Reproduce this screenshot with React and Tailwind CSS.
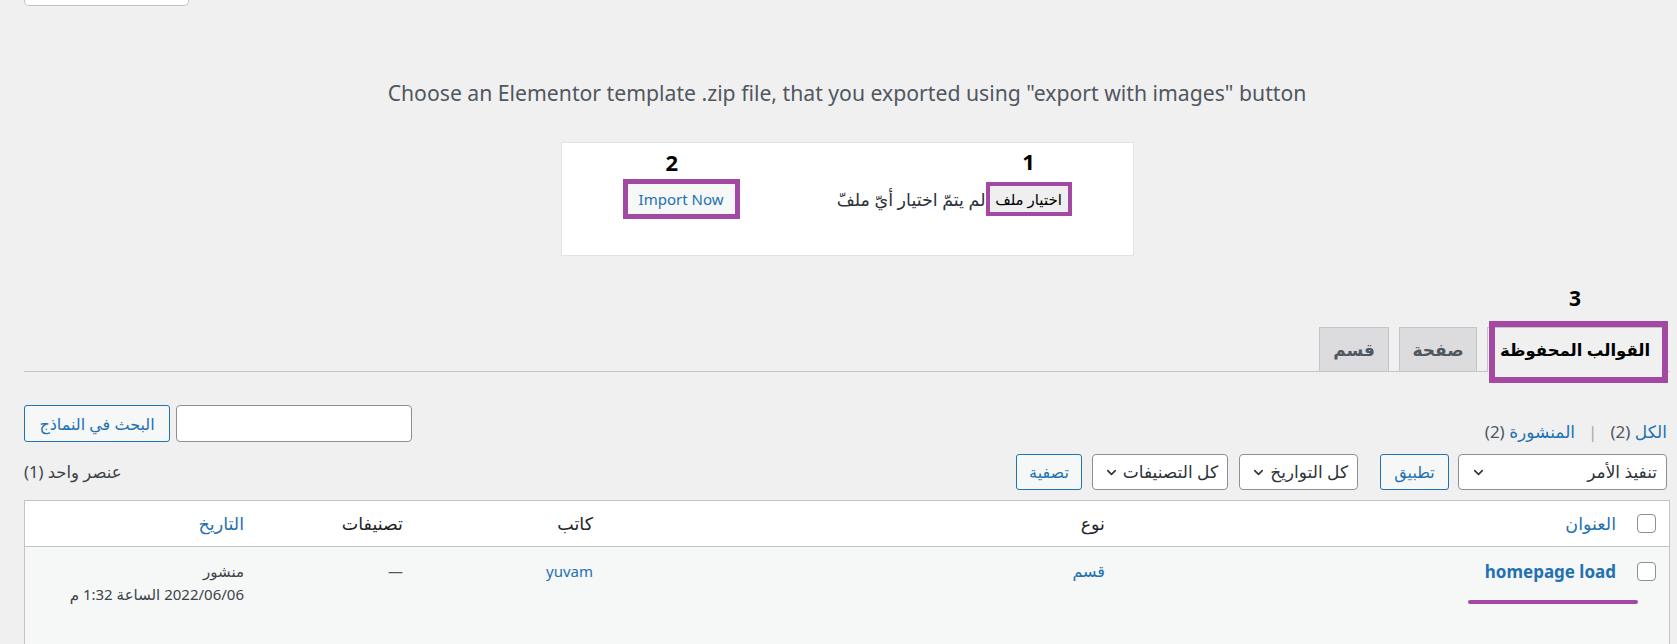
import React from 'react';
import { ChevronDown } from 'lucide-react';

// annotation frame colour used in the screenshot
const PURPLE = 'border-[#a349a4]';

const Select = ({ label, width }) => (
  <div
    className={`flex h-[36px] items-center justify-between gap-[4px] whitespace-nowrap rounded-[4px] border border-[#8c8f94] bg-white pr-[9px] pl-[12px] text-[17px] text-[#2c3338] ${width}`}
  >
    <span>{label}</span>
    <ChevronDown size={15} strokeWidth={2.5} className="shrink-0 text-[#2c3338]" />
  </div>
);

const SecondaryButton = ({ children, width }) => (
  <button
    className={`flex h-[36px] items-center justify-center whitespace-nowrap rounded-[3px] border border-[#2271b1] bg-[#f6f7f7] text-[16px] text-[#2271b1] ${width}`}
  >
    {children}
  </button>
);

const Checkbox = () => (
  <span className="block h-[19px] w-[19px] rounded-[4px] border border-[#8c8f94] bg-white" />
);

const App = () => {
  return (
    <div
      dir="rtl"
      className="h-[644px] overflow-hidden bg-[#f0f0f1] pl-[24px] pr-[7px] font-['Noto_Sans','DejaVu_Sans',sans-serif] text-[#3c434a]"
    >
      {/* partial box cut off at the top */}
      <div className="flex justify-end">
        <div className="h-[6px] w-[165px] rounded-b-[5px] border border-t-0 border-[#c3c4c7] bg-white" />
      </div>

      <h2 dir="ltr" className="mt-[72px] text-center text-[21.2px] leading-[30px] text-[#50575e]">
        Choose an Elementor template .zip file, that you exported using "export with images" button
      </h2>

      {/* upload box */}
      <div className="mx-auto mt-[34px] flex h-[114px] w-[573px] items-center justify-center gap-[90px] border border-[#e2e2e2] bg-white">
        <div className="flex items-center">
          <span className={`relative border-[4px] ${PURPLE}`}>
            <span className="absolute -top-[36px] left-1/2 -translate-x-1/2 text-[22px] font-bold leading-[22px] text-black">
              1
            </span>
            <span className="flex h-[26px] w-[78px] items-center justify-center bg-[#efefef] text-[15px] text-black">
              اختيار ملف
            </span>
          </span>
          <span className="w-[156px] text-[17.5px] text-[#2c3338]">لم يتمّ اختيار أيّ ملفّ</span>
        </div>
        <span className={`relative border-[5px] ${PURPLE}`}>
          <span className="absolute -top-[33px] left-[38px] text-[22px] font-bold leading-[22px] text-black">
            2
          </span>
          <span className="flex h-[30px] w-[107px] items-center justify-center bg-[#f6f7f7] text-[15px] text-[#2271b1]">
            Import Now
          </span>
        </span>
      </div>

      {/* tabs */}
      <div className="mt-[71px] flex items-end gap-[10px] border-b border-[#c3c4c7] pr-[7px]">
        <div className="relative -mb-px flex h-[45px] w-[176px] items-center justify-center whitespace-nowrap border border-b-0 border-[#c3c4c7] bg-[#f0f0f1] text-[16.5px] font-bold text-black">
          القوالب المحفوظة
          <span className={`pointer-events-none absolute -top-[7px] -right-[6px] -bottom-[11px] left-[1px] border-[6px] ${PURPLE}`} />
          <span className="absolute -top-[40px] left-1/2 -translate-x-1/2 text-[21px] font-bold leading-[21px] text-black">
            3
          </span>
        </div>
        <div className="flex h-[44px] w-[78px] items-center justify-center border border-b-0 border-[#c3c4c7] bg-[#dcdcde] text-[17px] font-bold text-[#50575e]">
          صفحة
        </div>
        <div className="flex h-[44px] w-[70px] items-center justify-center border border-b-0 border-[#c3c4c7] bg-[#dcdcde] text-[17px] font-bold text-[#50575e]">
          قسم
        </div>
      </div>

      {/* status links + search */}
      <div className="mt-[33px] flex items-end justify-between pr-[3px]">
        <div className="flex items-center gap-[13px] text-[17px] leading-[20px]">
          <span className="text-[#2271b1]">
            الكل <span className="text-[#50575e]">(2)</span>
          </span>
          <span className="text-[#a7aaad]">|</span>
          <span className="text-[#2271b1]">
            المنشورة <span className="text-[#50575e]">(2)</span>
          </span>
        </div>
        <div className="flex items-center gap-[6px]">
          <div className="h-[37px] w-[236px] rounded-[4px] border border-[#8c8f94] bg-white" />
          <SecondaryButton width="w-[146px] h-[37px]">البحث في النماذج</SecondaryButton>
        </div>
      </div>

      {/* bulk actions + filters */}
      <div className="mt-[12px] flex items-center justify-between pr-[3px]">
        <div className="flex items-center">
          <Select label="تنفيذ الأمر" width="w-[209px]" />
          <div className="mr-[9px]">
            <SecondaryButton width="w-[69px]">تطبيق</SecondaryButton>
          </div>
          <div className="mr-[22px]">
            <Select label="كل التواريخ" width="w-[119px]" />
          </div>
          <div className="mr-[11px]">
            <Select label="كل التصنيفات" width="w-[136px]" />
          </div>
          <div className="mr-[10px]">
            <SecondaryButton width="w-[66px]">تصفية</SecondaryButton>
          </div>
        </div>
        <span className="text-[16.5px] text-[#3c434a]">عنصر واحد (1)</span>
      </div>

      {/* table */}
      <div className="mt-[10px] border border-[#c3c4c7]">
        <div className="grid h-[46px] grid-cols-[44px_510px_512px_190px_159px_1fr] items-center border-b border-[#c3c4c7] bg-white text-[17.5px]">
          <div className="flex pr-[13px]">
            <Checkbox />
          </div>
          <div className="pr-[9px] text-[#2271b1]">العنوان</div>
          <div className="pr-[10px] text-[#1d2327]">نوع</div>
          <div className="pr-[10px] text-[#1d2327]">كاتب</div>
          <div className="pr-[10px] text-[#1d2327]">تصنيفات</div>
          <div className="pr-[10px] text-[#2271b1]">التاريخ</div>
        </div>
        <div className="grid h-[120px] grid-cols-[44px_510px_512px_190px_159px_1fr] items-start bg-[#f6f7f7] pt-[13px] text-[15px] leading-[23px]">
          <div className="flex pt-[2px] pr-[13px]">
            <Checkbox />
          </div>
          <div className="relative pr-[9px]">
            <span dir="ltr" className="text-[17px] font-bold text-[#2271b1]">
              homepage load
            </span>
            <span className="absolute top-[40px] right-[-13px] h-[4px] w-[170px] rounded-full bg-[#a349a4]" />
          </div>
          <div className="pr-[10px] text-[16px] text-[#2271b1]">قسم</div>
          <div className="pr-[10px] text-[#2271b1]">yuvam</div>
          <div className="pr-[10px] text-[#50575e]">—</div>
          <div className="pr-[10px] text-[#3c434a]">
            <div className="text-[15px]">منشور</div>
            <div>2022/06/06 الساعة 1:32 م</div>
          </div>
        </div>
      </div>
    </div>
  );
};

export default App;
